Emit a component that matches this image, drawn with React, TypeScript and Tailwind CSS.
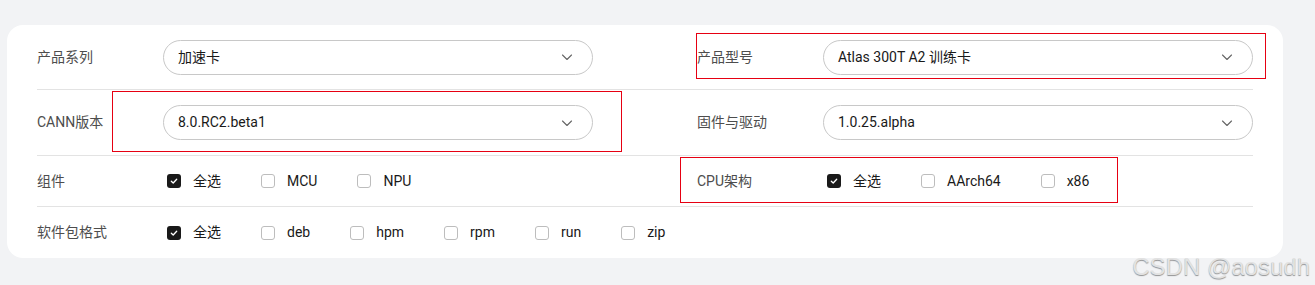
import { ReactNode } from "react"

const font = { fontFamily: 'Roboto, "Noto Sans CJK SC", sans-serif' }

const Chevron = () => (
  <svg width="14" height="14" viewBox="0 0 14 14" fill="none" className="shrink-0">
    <path d="M2.5 5 L7 9.5 L11.5 5" stroke="#666" strokeWidth="1.1" strokeLinecap="round" strokeLinejoin="round" />
  </svg>
)

const Select = ({ value }: { value: string }) => (
  <div className="flex items-center justify-between w-[430px] h-[35px] pl-[14px] pr-[18px] rounded-full border border-[#c8c8c8] bg-white text-[14px] text-[#191919]">
    <span>{value}</span>
    <Chevron />
  </div>
)

const Checkbox = ({ label, checked }: { label: string; checked?: boolean }) => (
  <div className="flex items-center gap-3">
    {checked ? (
      <span className="flex items-center justify-center w-[14px] h-[14px] rounded-[3px] bg-[#191919]">
        <svg width="10" height="10" viewBox="0 0 10 10" fill="none">
          <path d="M2.3 5.2 L4.2 7 L7.7 3.2" stroke="#fff" strokeWidth="1.3" strokeLinecap="round" strokeLinejoin="round" />
        </svg>
      </span>
    ) : (
      <span className="w-[14px] h-[14px] rounded-[3px] border border-[#bdbdbd] bg-white" />
    )}
    <span className="text-[14px] text-[#191919]">{label}</span>
  </div>
)

const Field = ({ label, children }: { label: string; children: ReactNode }) => (
  <div className="flex items-center">
    <span className="w-[126px] shrink-0 text-[14px] text-[#4d4d4d]">{label}</span>
    {children}
  </div>
)

const Checks = ({ items }: { items: string[] }) => (
  <div className="flex items-center gap-10 pl-1">
    <Checkbox label="全选" checked />
    {items.map((i) => (
      <Checkbox key={i} label={i} />
    ))}
  </div>
)

export default function App() {
  return (
    <div className="relative w-[1315px] h-[285px] bg-[#f2f3f5] pt-[25px] pl-[7px] overflow-hidden" style={font}>
      <div className="w-[1276px] h-[233px] rounded-2xl bg-white px-[30px]">
        <div className="grid grid-cols-2 gap-x-[104px] h-[65px] items-center border-b border-[#e3e3e3]">
          <Field label="产品系列">
            <Select value="加速卡" />
          </Field>
          <Field label="产品型号">
            <Select value="Atlas 300T A2 训练卡" />
          </Field>
        </div>
        <div className="grid grid-cols-2 gap-x-[104px] h-[66px] items-center border-b border-[#e3e3e3]">
          <Field label="CANN版本">
            <Select value="8.0.RC2.beta1" />
          </Field>
          <Field label="固件与驱动">
            <Select value="1.0.25.alpha" />
          </Field>
        </div>
        <div className="grid grid-cols-2 gap-x-[104px] h-[51px] items-center border-b border-[#e3e3e3]">
          <Field label="组件">
            <Checks items={["MCU", "NPU"]} />
          </Field>
          <Field label="CPU架构">
            <Checks items={["AArch64", "x86"]} />
          </Field>
        </div>
        <div className="flex h-[51px] items-center">
          <Field label="软件包格式">
            <Checks items={["deb", "hpm", "rpm", "run", "zip"]} />
          </Field>
        </div>
      </div>

      <div className="absolute left-[696px] top-[33px] w-[570px] h-[46px] border border-[#e60012]" />
      <div className="absolute left-[112px] top-[91px] w-[510px] h-[61px] border border-[#e60012]" />
      <div className="absolute left-[680px] top-[157px] w-[438px] h-[46px] border border-[#e60012]" />

      <div
        className="absolute right-[5px] bottom-[6px] text-[24px] leading-none text-[#e2e2e2] [text-shadow:0_1px_1px_rgba(0,0,0,0.4)]"
        style={{ fontFamily: '"Liberation Sans", Arial, sans-serif' }}
      >
        CSDN @aosudh
      </div>
    </div>
  )
}
